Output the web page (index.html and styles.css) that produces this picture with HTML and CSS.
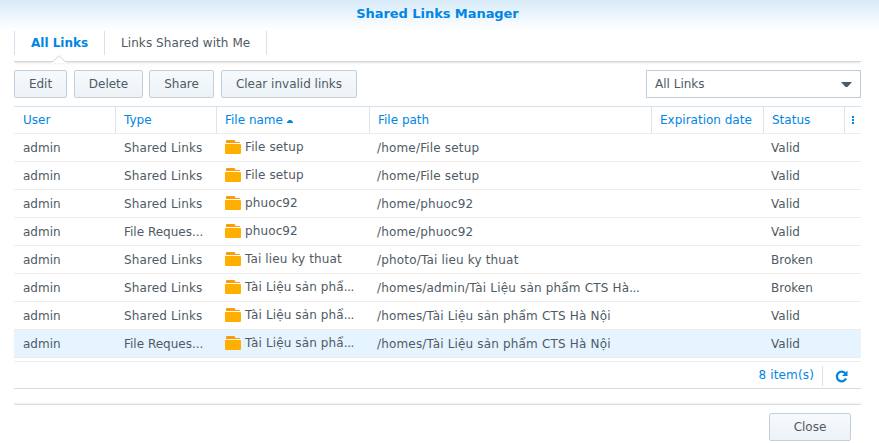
FILE: index.html
```html
<!DOCTYPE html>
<html lang="en">
<head>
<meta charset="utf-8">
<title>Shared Links Manager</title>
<link rel="stylesheet" href="styles.css">
</head>
<body>
<svg width="0" height="0" class="defs">
  <symbol id="folder" viewBox="0 0 16 14"><path fill="#ff9b00" d="M1 3V1q0-1 1-1h7.500l1 2H14.500q.5 0 .5 1z"/><path fill="#ffaf00" d="M0 4h15q1 0 1 1v8q0 1-1 1H1q-1 0-1-1z"/></symbol>
</svg>
<div class="window">
  <header class="title">Shared Links Manager</header>
  <nav class="tabs">
    <a class="tab active">All Links<svg class="notch" width="14" height="8" viewBox="0 0 14 8"><path d="M0 8V6.500H1L7 .7 13 6.500h1V8z" fill="#fff"/><path d="M0 6.500H1L7 .7 13 6.500h1" fill="none" stroke="#d0d3d6"/></svg></a>
    <a class="tab">Links Shared with Me</a>
  </nav>
  <div class="toolbar">
    <button class="btn edit">Edit</button>
    <button class="btn delete">Delete</button>
    <button class="btn share">Share</button>
    <button class="btn clear">Clear invalid links</button>
    <div class="select"><span>All Links</span><svg width="11" height="6" viewBox="0 0 11 6"><path d="M0 0h11L6.500 5h-2z" fill="#4d5b69"/></svg></div>
  </div>
  <div class="grid">
    <div class="row head"><div>User</div><div>Type</div><div>File name<svg class="sort" width="6" height="3" viewBox="0 0 6 3"><path d="M0 3V2L2 0h2l2 2v1z" fill="#0086e5"/></svg></div><div>File path</div><div>Expiration date</div><div>Status</div><div class="more"><i></i><i></i><i></i></div></div>
    <div class="row"><div>admin</div><div class="type">Shared Links</div><div class="name"><svg><use href="#folder"/></svg><span>File setup</span></div><div class="path">/home/File setup</div><div></div><div>Valid</div></div>
    <div class="row"><div>admin</div><div class="type">Shared Links</div><div class="name"><svg><use href="#folder"/></svg><span>File setup</span></div><div class="path">/home/File setup</div><div></div><div>Valid</div></div>
    <div class="row"><div>admin</div><div class="type">Shared Links</div><div class="name"><svg><use href="#folder"/></svg><span>phuoc92</span></div><div class="path">/home/phuoc92</div><div></div><div>Valid</div></div>
    <div class="row"><div>admin</div><div>File Reques...</div><div class="name"><svg><use href="#folder"/></svg><span>phuoc92</span></div><div class="path">/home/phuoc92</div><div></div><div>Valid</div></div>
    <div class="row"><div>admin</div><div class="type">Shared Links</div><div class="name"><svg><use href="#folder"/></svg><span>Tai lieu ky thuat</span></div><div class="path">/photo/Tai lieu ky thuat</div><div></div><div>Broken</div></div>
    <div class="row"><div>admin</div><div class="type">Shared Links</div><div class="name"><svg><use href="#folder"/></svg><span>Tài Liệu sản phẩ<b>...</b></span></div><div class="path">/homes/admin/Tài Liệu sản phẩm CTS Hà<b>...</b></div><div></div><div>Broken</div></div>
    <div class="row"><div>admin</div><div class="type">Shared Links</div><div class="name"><svg><use href="#folder"/></svg><span>Tài Liệu sản phẩ<b>...</b></span></div><div class="path">/homes/Tài Liệu sản phẩm CTS Hà Nội</div><div></div><div>Valid</div></div>
    <div class="row selected"><div>admin</div><div>File Reques...</div><div class="name"><svg><use href="#folder"/></svg><span>Tài Liệu sản phẩ<b>...</b></span></div><div class="path">/homes/Tài Liệu sản phẩm CTS Hà Nội</div><div></div><div>Valid</div></div>
  </div>
  <div class="paging"><span class="count">8 item(s)</span><svg class="refresh" width="13" height="13" viewBox="0 0 13 13"><path d="M10.300 3.300A4.800 4.800 0 1 0 11 8.600" fill="none" stroke="#0086e5" stroke-width="2.300"/><path d="M12.500 .5V6H7z" fill="#0086e5"/></svg></div>
  <footer class="footer"><button class="btn close">Close</button></footer>
</div>
</body>
</html>
```
FILE: styles.css
```css
* { box-sizing: border-box; }
body {
  margin: 0;
  background: #fff;
  color: #505a64;
  font: 12px/20px Verdana, "DejaVu Sans", sans-serif;
}
.defs { position: absolute; }
.window {
  height: 443px;
  padding: 0 18px 0 14px;
  background: linear-gradient(#d8ebf9, #fff 30px);
}
.title {
  height: 31px;
  padding-top: 4px;
  color: #0086e5;
  font-weight: bold;
  font-size: 13px;
  letter-spacing: -.06px;
  text-align: center;
}
.tabs {
  display: flex;
  height: 31px;
  border-bottom: 1px solid #d5d5d5;
  box-shadow: 0 2px 2px -1px #e4e4e4;
}
.tab {
  position: relative;
  height: 24px;
  padding: 2px 16px 0;
  border-right: 1px solid #d5e2ee;
  letter-spacing: .08px;
  white-space: nowrap;
}
.tab:first-child { width: 91px; border-left: 1px solid #d5e2ee; }
.tab:last-child { width: 162px; }
.tab.active { color: #0086e5; font-weight: bold; letter-spacing: 0; }
.notch { position: absolute; left: 37px; top: 24px; }
.toolbar { display: flex; height: 44px; padding-top: 8px; }
.btn {
  height: 28px;
  padding: 0;
  border: 1px solid #c3d0dc;
  border-radius: 2px;
  background: linear-gradient(#f6fafd, #edf2f6);
  color: #505a64;
  font: inherit;
}
.edit { width: 53px; margin-right: 7px; }
.delete { width: 69px; margin-right: 6px; }
.share { width: 65px; margin-right: 7px; }
.clear { width: 136px; }
.select {
  display: flex;
  width: 215px;
  height: 28px;
  margin-left: auto;
  padding: 3px 8px 0;
  border: 1px solid #c0ccdc;
  background: #fff;
  justify-content: space-between;
}
.select svg { margin-top: 8px; }
.grid { border-top: 1px solid #d5e2ee; }
.row {
  display: grid;
  grid-template-columns: 102px 101px 153px 282px 112px 81px 16px;
  height: 28px;
  border-bottom: 1px solid #ececec;
}
.row > div { padding: 4px 0 0 8px; white-space: nowrap; overflow: hidden; }
.row > div:first-child { padding-left: 9px; }
.row:not(.head) > div:nth-child(n+4) { padding-left: 7px; }
.row b { font-weight: normal; letter-spacing: -.4px; }
.type { letter-spacing: .12px; }
.path { letter-spacing: .17px; }
.head { height: 27px; color: #0086e5; }
.head > div { padding-top: 3px; border-right: 1px solid #d9e6f2; }
.head > .more { display: grid; align-content: start; gap: 1px; padding: 9px 0 0 7px; border: 0; }
.more i { width: 2px; height: 2px; background: #0086e5; }
.sort { margin-left: 4px; vertical-align: 1px; }
.row > .name { display: flex; padding-top: 3px; letter-spacing: .12px; }
.name svg { width: 16px; height: 14px; margin: 3px 4px 0 0; }
.selected { background: #e6f4ff; }
.paging {
  display: flex;
  height: 28px;
  margin-top: 3px;
  border-top: 1px solid #ececec;
  border-bottom: 1px solid #d0deea;
  color: #0086e5;
  justify-content: flex-end;
}
.count { height: 20px; margin-top: 4px; padding-right: 8px; border-right: 1px solid #d5e2ee; line-height: 18px; letter-spacing: .15px; }
.refresh { margin: 8px 13px 0 12px; }
.footer {
  display: flex;
  height: 54px;
  margin-top: 13px;
  padding: 11px 10px 0;
  background: linear-gradient(#fff, #f0f0f0 2px, #ddd 2px, #ddd 3px, #fff 3px);
  justify-content: flex-end;
}
.close { width: 82px; }
```
